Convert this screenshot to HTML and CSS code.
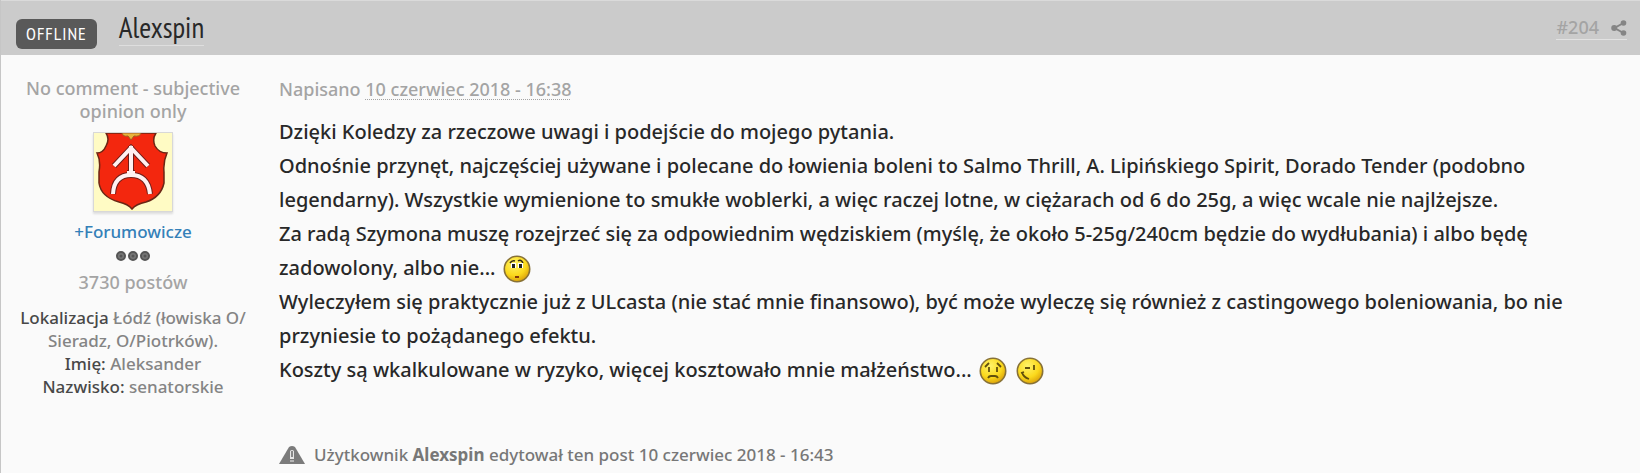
FILE: index.html
```html
<!DOCTYPE html>
<html lang="pl">
<head>
<meta charset="utf-8">
<title>Alexspin – post #204</title>
<link rel="stylesheet" href="styles.css">
</head>
<body>
<article class="post">
  <header class="post-header">
    <span class="status">OFFLINE</span>
    <a class="username" href="#user">Alexspin</a>
    <a class="permalink" href="#204">#204
      <svg class="share" viewBox="0 0 16 16" aria-hidden="true"><path d="M12.500 3 3.500 8l9 5" fill="none" stroke="currentColor" stroke-width="2"/><circle cx="12.500" cy="3" r="2.800"/><circle cx="3.200" cy="8" r="3"/><circle cx="12.500" cy="13" r="2.800"/></svg>
    </a>
  </header>
  <div class="post-body">
    <aside class="author">
      <p class="author-title">No comment - subjective opinion only</p>
      <svg class="avatar" viewBox="0 0 78 78" role="img" aria-label="Herb">
        <rect width="78" height="78" fill="#fffbc4"/>
        <path d="M12 0Q16 6 12 13Q9 20 3 20Q7 28 5 39V50Q7 64 25 69Q34 71 38 76Q42 71 52 69Q67 64 70 50V39Q69 29 73 20Q65 20 61 13Q58 6 62 0Z" fill="#f3270e" stroke="#6b2615" stroke-width="1.500"/>
        <path d="M28 0q1 4 6 3l3 4 3-4q6 1 7-3z" fill="#e8b43c" stroke="#a35a20"/>
        <path d="M37 13V40M20 33 37 15 54 33M19 61Q20 42 37 42T56 61M33 40h8" fill="none" stroke="#701e19" stroke-width="6"/>
        <path d="M37 13V40M20 33 37 15 54 33M19 61Q20 42 37 42T56 61M33 40h8" fill="none" stroke="#fff1f1" stroke-width="4"/>
      </svg>
      <a class="group" href="#group">+Forumowicze</a>
      <svg class="pips" viewBox="0 0 34 10" aria-hidden="true"><g fill="#777" stroke="#555" stroke-width="2"><circle cx="5" cy="5" r="4"/><circle cx="17" cy="5" r="4"/><circle cx="29" cy="5" r="4"/></g><g fill="#555"><circle cx="5" cy="5" r="1.500"/><circle cx="17" cy="5" r="1.500"/><circle cx="29" cy="5" r="1.500"/></g></svg>
      <p class="post-count">3730 postów</p>
      <ul class="fields">
        <li><span class="label">Lokalizacja</span> Łódź (łowiska O/<wbr>Sieradz, O/Piotrków).</li>
        <li><span class="label">Imię:</span> Aleksander</li>
        <li><span class="label">Nazwisko:</span> senatorskie</li>
      </ul>
    </aside>
    <section class="content">
      <p class="posted">Napisano <time class="date">10 czerwiec 2018 - 16:38</time></p>
      <div class="message">
        <p>Dzięki Koledzy za rzeczowe uwagi i podejście do mojego pytania.</p>
        <p>Odnośnie przynęt, najczęściej używane i polecane do łowienia boleni to Salmo Thrill, A. Lipińskiego Spirit, Dorado Tender (podobno legendarny). Wszystkie wymienione to smukłe woblerki, a więc raczej lotne, w ciężarach od 6 do 25g, a więc wcale nie najlżejsze.</p>
        <p>Za radą Szymona muszę rozejrzeć się za odpowiednim wędziskiem (myślę, że około 5-25g/240cm będzie do wydłubania) i albo będę zadowolony, albo nie...
          <svg class="smiley" viewBox="0 0 28 28" role="img" aria-label="zdziwiony"><defs><radialGradient id="face" cx=".4" cy=".3" r=".75"><stop offset="0" stop-color="#fff36a"/><stop offset=".6" stop-color="#fbd91c"/><stop offset="1" stop-color="#d79b08"/></radialGradient></defs><circle cx="14" cy="14" r="12.700" fill="url(#face)" stroke="#877137" stroke-width="1.600"/><path d="M7 8q2-3 5-2M15 6q3-2 5 2" fill="none" stroke="#332a10" stroke-width="1.500"/><path d="M8 8h5v5H8zM15 8h5v5h-5z" fill="#fff"/><path d="M9 9h3v4H9zM16 9h3v4h-3z" fill="#222"/><path d="M12 21h4v2h-4z" fill="#843808"/></svg></p>
        <p>Wyleczyłem się praktycznie już z ULcasta (nie stać mnie finansowo), być może wyleczę się również z castingowego boleniowania, bo nie przyniesie to pożądanego efektu.</p>
        <p>Koszty są wkalkulowane w ryzyko, więcej kosztowało mnie małżeństwo...
          <svg class="smiley" viewBox="0 0 28 28" role="img" aria-label="smutny"><circle cx="14" cy="14" r="12.700" fill="url(#face)" stroke="#877137" stroke-width="1.600"/><path d="M6 10l4-4M18 6l4 4M10 10v5M18 10v5M9 21q1-2 3-2h4q2 0 3 2" fill="none" stroke="#62500c" stroke-width="1.800"/></svg>
          <svg class="smiley" viewBox="0 0 28 28" role="img" aria-label="mruga"><circle cx="14" cy="14" r="12.700" fill="url(#face)" stroke="#877137" stroke-width="1.600"/><path d="M9 11h5M18 8v5M6 15q1 5 7 7M5 16l3-1" fill="none" stroke="#62500c" stroke-width="1.800"/></svg></p>
      </div>
      <p class="edited">
        <svg class="warning" viewBox="0 0 26 18" aria-hidden="true"><path d="M10 1q3-2 6 0l10 17H0z" fill="#7b7b7b"/><path d="M11 5q2-2 4 0v8h-4z" fill="#e6e6e6"/><path d="M12 5h2v6h-2z" fill="#888"/><path d="M11 14h4v2h-4z" fill="#b5b5b5"/></svg>
        <span>Użytkownik <strong>Alexspin</strong> edytował ten post 10 czerwiec 2018 - 16:43</span>
      </p>
    </section>
  </div>
</article>
</body>
</html>
```
FILE: styles.css
```css
body {
  margin: 0;
  background: #fafafa;
  font-family: "Trebuchet MS", "Noto Sans", sans-serif;
  font-weight: 500;
  color: #282828;
}

p, ul { margin: 0; padding: 0; }
ul { list-style: none; }
a { text-decoration: none; }

.post { box-sizing: border-box; min-height: 100vh; border-left: 1px solid #c6c6c6; }

.post-header {
  display: flex;
  align-items: center;
  box-sizing: border-box;
  height: 55px;
  padding: 0 13px 0 15px;
  border-top: 1px solid #dadada;
  background: #cbcbcb;
}

.status {
  margin-top: 12px;
  padding: 0 10px;
  border-radius: 6px;
  background: #595959;
  color: #fff;
  font: 18px/30px "PT Sans Narrow", "Liberation Sans Narrow", "Open Sans", sans-serif;
  letter-spacing: 1px;
}

.username {
  margin-left: 22px;
  border-bottom: 1px solid #dedede;
  color: #282828;
  font: 29px/35px "PT Sans Narrow", "Liberation Sans Narrow", "Open Sans", sans-serif;
}

.permalink {
  display: flex;
  align-items: center;
  gap: 12px;
  margin-left: auto;
  border-bottom: 1px solid #e2e2e2;
  color: #a4a4a4;
  font-size: 18px;
  line-height: 23px;
}

.share { width: 16px; height: 16px; color: #858585; fill: currentColor; }

.post-body { display: flex; gap: 28px; padding: 22px 48px 0 14px; }

.author {
  display: flex;
  flex: 0 0 236px;
  flex-direction: column;
  align-items: center;
  text-align: center;
}

.author-title { padding: 0 4px; color: #a4a4a4; font-size: 18px; line-height: 23px; }

.avatar {
  width: 78px;
  height: 78px;
  margin-top: 9px;
  border: 1px solid #d8d8d8;
  box-shadow: 0 2px 2px #ddd;
}

.group { margin-top: 8px; color: #3480b8; font-size: 17px; line-height: 23px; }
.pips { width: 34px; height: 10px; margin-top: 8px; }
.post-count { margin-top: 9px; color: #a4a4a4; font-size: 18px; line-height: 24px; }
.fields { margin-top: 12px; color: #848484; font-size: 17px; line-height: 23px; }
.label { color: #484848; }

.content { flex: 1; min-width: 0; }
.posted { color: #a4a4a4; font-size: 18px; line-height: 24px; }
.date { text-decoration: underline dotted 1px; text-underline-offset: 3px; text-decoration-skip-ink: none; }
.message { margin-top: 14px; font-size: 20px; line-height: 34px; }
.smiley { width: 28px; height: 28px; margin: 0 2px 2px; vertical-align: middle; }

.edited {
  display: flex;
  align-items: center;
  gap: 9px;
  margin-top: 56px;
  color: #777;
  font-size: 17px;
  line-height: 24px;
}

.warning { width: 26px; height: 18px; }
```
